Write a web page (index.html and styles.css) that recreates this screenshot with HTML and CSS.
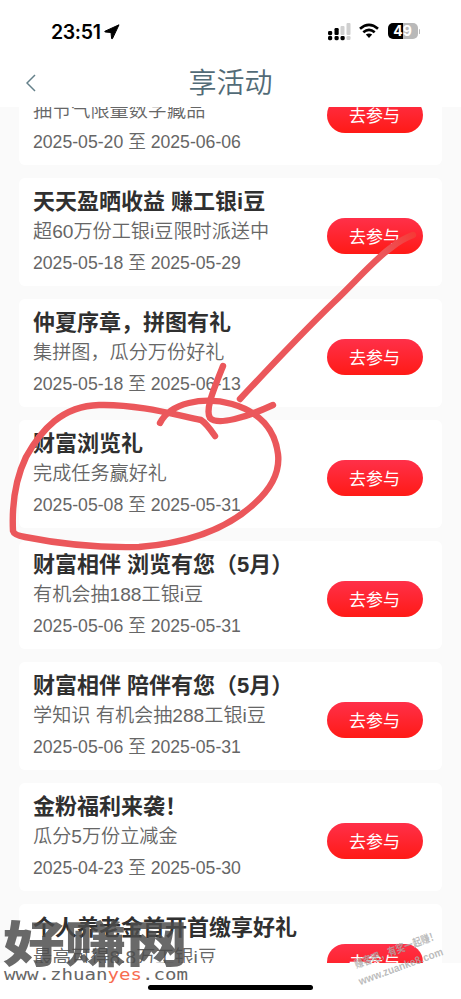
FILE: index.html
```html
<!DOCTYPE html>
<html lang="zh-CN">
<head>
<meta charset="utf-8">
<title>享活动</title>
<link rel="stylesheet" href="styles.css">
</head>
<body>
<div class="screen">
  <header class="status">
    <div class="clock">23:51
      <svg width="16" height="16" viewBox="0 0 16 16"><path d="M15 .8 1 7.2q-.8.6.3.8L7 8.5l.6 6q.3 1 .9.1z" stroke="#000"/></svg>
    </div>
    <div class="indicators">
      <svg class="signal" width="26" height="18" viewBox="0 0 26 18">
        <g fill="#d0d0d0"><rect x="12.5" y="3" width="4" height="9" rx="1"/><rect x="18.5" y="0" width="4" height="12" rx="1"/><rect x="18.5" y="13" width="4" height="4" rx="1.2"/></g>
        <rect x="0" y="8" width="4.2" height="4.2" rx="1.4"/><rect x="6.5" y="5" width="4.2" height="7" rx="1.2"/>
        <rect x="0" y="13" width="4.2" height="4.2" rx="1.4"/><rect x="6.5" y="13" width="4.2" height="4.2" rx="1.4"/><rect x="12.5" y="13" width="4.2" height="4.2" rx="1.4"/>
      </svg>
      <svg class="wifi" width="20" height="16" viewBox="0 0 20 16"><g fill="none" stroke="#000" stroke-width="2.7"><path d="M1 5.7Q10-2 19 5.7"/><path d="M4.3 9.3q5.7-4.7 11.4 0"/></g><path d="m6.8 11.6q3.2-2.4 6.4 0L10 15z"/></svg>
      <div class="battery">49</div><i class="cap"></i>
    </div>
  </header>
  <nav class="nav">
    <svg class="back" width="10" height="18" viewBox="0 0 10 18"><path d="M9 1 1 9l8 8" fill="none" stroke="#64808a" stroke-width="1.5"/></svg>
    <h1>享活动</h1>
  </nav>
  <main class="list">
    <article class="card first"><div class="info"><p>抽节气限量数字藏品</p><time>2025-05-20 至 2025-06-06</time></div><button>去参与</button></article>
    <article class="card"><div class="info"><h2>天天盈晒收益 赚工银i豆</h2><p>超60万份工银i豆限时派送中</p><time>2025-05-18 至 2025-05-29</time></div><button>去参与</button></article>
    <article class="card"><div class="info"><h2>仲夏序章，拼图有礼</h2><p>集拼图，瓜分万份好礼</p><time>2025-05-18 至 2025-06-13</time></div><button>去参与</button></article>
    <article class="card"><div class="info"><h2>财富浏览礼</h2><p>完成任务赢好礼</p><time>2025-05-08 至 2025-05-31</time></div><button>去参与</button></article>
    <article class="card"><div class="info"><h2>财富相伴 浏览有您（5月）</h2><p>有机会抽188工银i豆</p><time>2025-05-06 至 2025-05-31</time></div><button>去参与</button></article>
    <article class="card"><div class="info"><h2>财富相伴 陪伴有您（5月）</h2><p>学知识 有机会抽288工银i豆</p><time>2025-05-06 至 2025-05-31</time></div><button>去参与</button></article>
    <article class="card"><div class="info"><h2>金粉福利来袭！</h2><p>瓜分5万份立减金</p><time>2025-04-23 至 2025-05-30</time></div><button>去参与</button></article>
    <article class="card"><div class="info"><h2>个人养老金首开首缴享好礼</h2><p>最高可得8.8万工银i豆</p></div><button>去参与</button></article>
  </main>
  <footer class="home"><span></span></footer>
  <svg class="overlay" width="461" height="999" viewBox="0 0 461 999">
    <defs><linearGradient id="fade" gradientUnits="userSpaceOnUse" x1="380" y1="250" x2="414" y2="234"><stop offset="0" stop-color="#eb575b"/><stop offset="1" stop-color="#f63a37"/></linearGradient></defs>
    <g fill="none" stroke="#eb575b" stroke-width="6.4" stroke-linecap="round" stroke-linejoin="round">
      <path d="M215 436Q206 423 201 420C176 415 138 404 99 405C62 406 41 430 26 457C14 482 12 510 13 531Q14 535 25 537C60 544 101 548 139 547C190 543 229 527 254 504C272 488 280 471 278 454C275 430 260 412 232 404C203 396 170 403 160 423"/>
      <path d="M223 366C213 391 205 410 210 418C218 426 247 417 273 405"/>
      <path stroke="url(#fade)" d="M240 399C268 369 300 335 333 303C355 282 377 257 392 247Q402 239 413 235"/>
    </g>
    <g class="brand">
      <text class="brand-name" x="3" y="962" textLength="185" lengthAdjust="spacingAndGlyphs">好赚网</text>
      <text class="brand-url" x="4" y="980" textLength="184" lengthAdjust="spacingAndGlyphs">www.zhuan<tspan fill="#f76c50">yes</tspan>.com</text>
    </g>
    <g class="stamp" transform="rotate(-20 400 960)">
      <text x="356" y="953" textLength="88" lengthAdjust="spacingAndGlyphs">赚客吧，有奖一起赚！</text>
      <text x="354" y="970" textLength="89" lengthAdjust="spacingAndGlyphs">www.zuanke8.com</text>
    </g>
  </svg>
</div>
</body>
</html>
```
FILE: styles.css
```css
* { box-sizing: border-box; }
body { margin: 0; background: #fff; font-family: "Liberation Sans", "Noto Sans CJK SC", sans-serif; }
.screen { position: relative; width: 461px; height: 999px; overflow: hidden; display: flex; flex-direction: column; }
.status { height: 58px; flex: none; display: flex; justify-content: space-between; padding: 18px 41px 0 51px; }
.clock { display: flex; align-items: center; gap: 3px; height: 28px; font: 600 19.5px/28px Inter, sans-serif; letter-spacing: -.35px; }
.clock svg { margin-top: -1px; }
.indicators { display: flex; align-items: center; height: 28px; }
.signal { margin: 0 5px 0 0; }
.wifi { margin-right: 9px; margin-top: -2px; }
.battery { width: 30px; height: 16px; margin-top: -2px; border-radius: 5px; background: linear-gradient(90deg, #000 50%, #b9b9b9 50%); color: #fff; font: 700 14px/16px Inter, sans-serif; text-align: center; }
.cap { width: 1.5px; height: 5px; margin: -2px 0 0 1px; border-radius: 1px; background: #b9b9b9; }
.nav { height: 49px; flex: none; display: grid; grid-template-columns: 25px 1fr 25px; align-items: center; }
.back { margin-left: 26px; }
.nav h1 { margin: 2px 0 0; text-align: center; color: #526b77; font-weight: 350; font-size: 28px; line-height: 47px; }
.list { flex: none; height: 856px; overflow: hidden; background: #fafafa; padding: 0 19px; display: flex; flex-direction: column; gap: 13px; }
.card { flex: none; height: 108px; border-radius: 6px; background: #fff; padding: 8px 19px 0 14px; display: flex; justify-content: space-between; }
.first { margin-top: -50px; }
.first .info { padding-top: 30px; }
.info { display: flex; flex-direction: column; }
.card h2 { margin: 1px 0 -1px; font-size: 22px; line-height: 30px; font-weight: 700; color: #303030; white-space: nowrap; }
.card p { margin: 0; font-size: 19.15px; line-height: 31px; font-weight: 350; color: #666; white-space: nowrap; }
.card time { font-size: 17.65px; line-height: 32px; color: #666; white-space: nowrap; font-weight: 350; }
.card button { flex: none; width: 96px; height: 36px; margin-top: 32px; padding: 0 1px 1px 0; border: 0; border-radius: 18px; background: linear-gradient(#ff3049, #ff1a16); color: #fff; font: 400 17px/34px "Noto Sans CJK SC", sans-serif; }
.home { flex: 1; display: flex; justify-content: center; padding-top: 22px; }
.home span { width: 165px; height: 5px; border-radius: 3px; background: #000; }
.overlay { position: absolute; inset: 0; pointer-events: none; }
.brand-name { font: 900 49px "Noto Sans CJK SC", sans-serif; fill: #4c4c4c; fill-opacity: .84; }
.brand-url { font: 400 15px "DejaVu Sans Mono", monospace; fill: #666; }
.stamp { font: 700 11px "Liberation Sans", "Noto Sans CJK SC", sans-serif; fill: #aaa; fill-opacity: .8; }
```
